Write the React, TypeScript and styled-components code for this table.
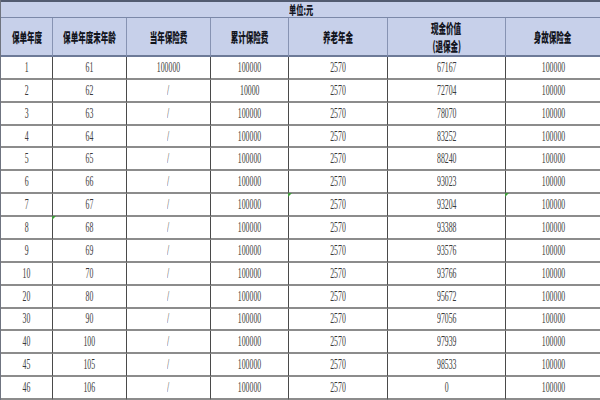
import styled, { createGlobalStyle } from "styled-components"

const GlobalStyle = createGlobalStyle`
  html, body {
    margin: 0;
    padding: 0;
    background: #ffffff;
  }
  body {
    width: 600px;
    height: 400px;
    overflow: hidden;
    -webkit-font-smoothing: antialiased;
  }
`

const Table = styled.div`
  display: grid;
  grid-template-columns: 52px 74px 84px 78px 99px 118px 95px;
  grid-template-rows: 18px 39px repeat(15, 1fr);
  width: 600px;
  height: 400px;
  box-sizing: border-box;
  border-left: 1px solid #6f7480;
  background: #ffffff;
`

const Title = styled.div`
  grid-column: 1 / -1;
  display: flex;
  align-items: center;
  justify-content: center;
  box-sizing: border-box;
  background: #c7d0ea;
  border-top: 2px solid #525b70;
  border-bottom: 1px solid #7b88a8;
  font-family: "Noto Sans CJK SC", "Liberation Sans", sans-serif;
  font-size: 12px;
  font-weight: 900;
  color: #14161f;
`

const HeadCell = styled.div`
  display: flex;
  flex-direction: column;
  align-items: center;
  justify-content: center;
  box-sizing: border-box;
  background: #c7d0ea;
  border-right: 1px solid #8793b3;
  border-bottom: 2px solid #6d7a98;
  font-family: "Noto Sans CJK SC", "Liberation Sans", sans-serif;
  font-size: 13px;
  font-weight: 900;
  line-height: 18px;
  color: #12141c;
  text-align: center;
`

const Cell = styled.div<{ $mark?: boolean }>`
  position: relative;
  display: flex;
  align-items: center;
  justify-content: center;
  box-sizing: border-box;
  border-right: 1px solid #4a4a4a;
  border-bottom: 2px solid #8c8c8c;
  font-family: "Liberation Serif", "Noto Sans CJK SC", serif;
  font-size: 15px;
  color: #3a3a3a;

  &::before {
    content: "";
    display: ${(p) => (p.$mark ? "block" : "none")};
    position: absolute;
    left: -1px;
    top: -1px;
    width: 0;
    height: 0;
    border-top: 4px solid #3f9a3a;
    border-right: 4px solid transparent;
  }
`

const Squeeze = styled.span<{ $scale?: number }>`
  display: inline-block;
  white-space: nowrap;
  transform: scaleX(${(p) => p.$scale ?? 0.52});
`

const headers = [
  ["保单年度"],
  ["保单年度末年龄"],
  ["当年保险费"],
  ["累计保险费"],
  ["养老年金"],
  ["现金价值", "(退保金)"],
  ["身故保险金"],
]

const rows = [
  ["1", "61", "100000", "100000", "2570", "67167", "100000"],
  ["2", "62", "/", "10000", "2570", "72704", "100000"],
  ["3", "63", "/", "100000", "2570", "78070", "100000"],
  ["4", "64", "/", "100000", "2570", "83252", "100000"],
  ["5", "65", "/", "100000", "2570", "88240", "100000"],
  ["6", "66", "/", "100000", "2570", "93023", "100000"],
  ["7", "67", "/", "100000", "2570", "93204", "100000"],
  ["8", "68", "/", "100000", "2570", "93388", "100000"],
  ["9", "69", "/", "100000", "2570", "93576", "100000"],
  ["10", "70", "/", "100000", "2570", "93766", "100000"],
  ["20", "80", "/", "100000", "2570", "95672", "100000"],
  ["30", "90", "/", "100000", "2570", "97056", "100000"],
  ["40", "100", "/", "100000", "2570", "97939", "100000"],
  ["45", "105", "/", "100000", "2570", "98533", "100000"],
  ["46", "106", "/", "100000", "2570", "0", "100000"],
]

// little green comment markers from the spreadsheet
const marks = new Set(["6-4", "6-6", "7-1"])

const App = () => {
  return (
    <>
      <GlobalStyle />
      <Table>
        <Title>
          <Squeeze $scale={0.6}>单位:元</Squeeze>
        </Title>
        {headers.map((lines, i) => (
          <HeadCell key={i}>
            {lines.map((l, j) => (
              <Squeeze key={j} $scale={0.58}>
                {l}
              </Squeeze>
            ))}
          </HeadCell>
        ))}
        {rows.map((row, r) =>
          row.map((v, c) => (
            <Cell key={`${r}-${c}`} $mark={marks.has(`${r}-${c}`)}>
              <Squeeze>{v}</Squeeze>
            </Cell>
          ))
        )}
      </Table>
    </>
  )
}

export default App
